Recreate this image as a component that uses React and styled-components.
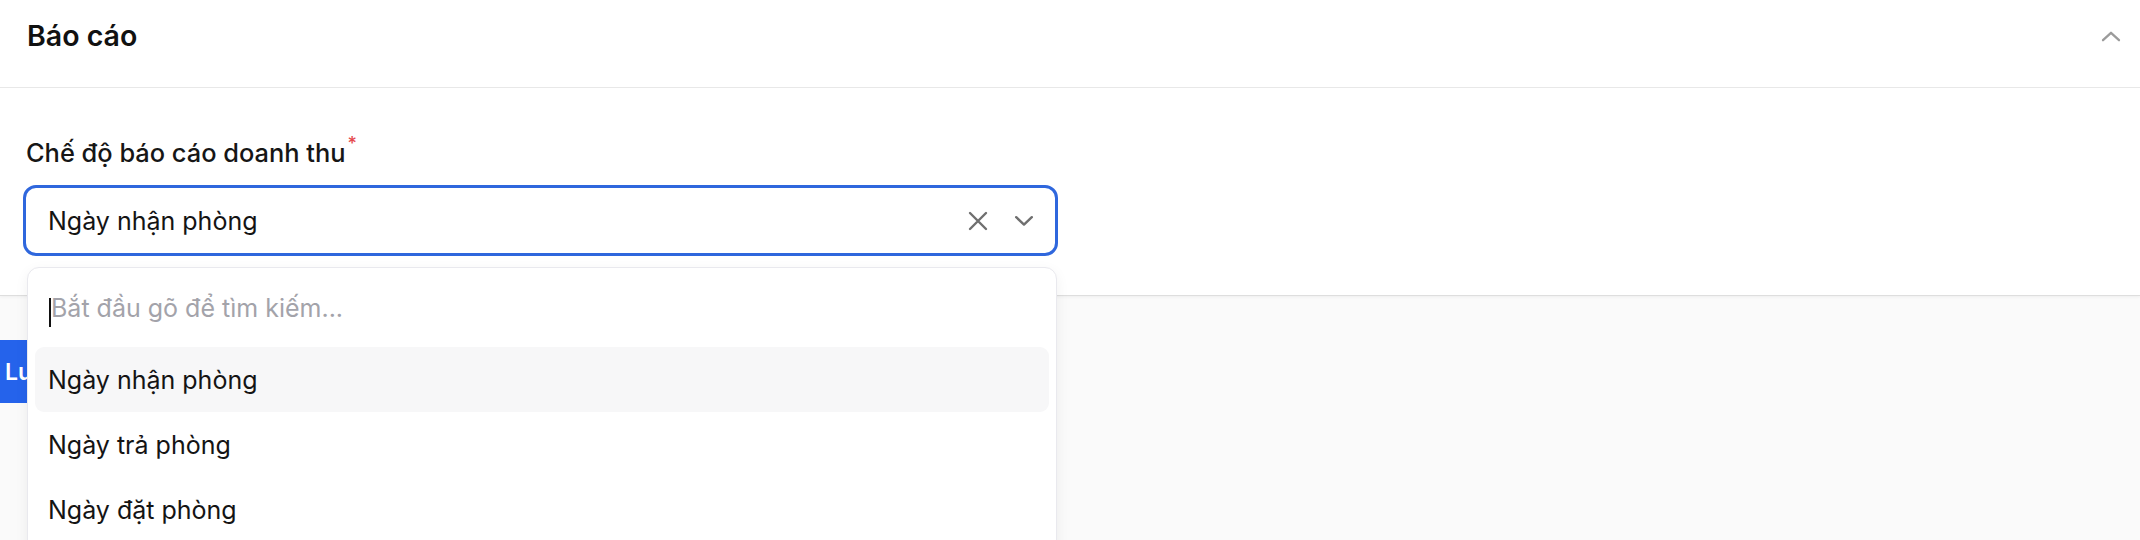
import React from "react";
import styled, { createGlobalStyle } from "styled-components";

const Global = createGlobalStyle`
  html, body { margin: 0; padding: 0; }
  body {
    background: #fafafa;
    font-family: Inter, "Noto Sans", "Liberation Sans", sans-serif;
    color: #141414;
    width: 2140px;
    height: 540px;
    overflow: hidden;
  }
`;

const Page = styled.div`
  position: relative;
  width: 2140px;
  height: 540px;
`;

const Card = styled.section`
  background: #fff;
  border-bottom: 1px solid #dedede;
  box-shadow: 0 1px 3px rgba(0, 0, 0, 0.05);
`;

const Header = styled.header`
  height: 88px;
  box-sizing: border-box;
  display: flex;
  align-items: flex-start;
  justify-content: space-between;
  padding: 19px 19px 0 27px;
  border-bottom: 1px solid #e8e8e8;
`;

const Title = styled.h2`
  margin: 0;
  font-size: 28.5px;
  line-height: 34px;
  font-weight: 600;
  color: #111;
`;

const IconButton = styled.button`
  border: 0;
  background: none;
  padding: 0;
  height: ${(p) => p.$h || "auto"};
  display: flex;
  align-items: center;
  justify-content: center;
  color: ${(p) => p.$color || "#8a8a8a"};
  cursor: pointer;
`;

const Body = styled.div`
  padding: 50px 23px 39px;
`;

const Label = styled.label`
  display: block;
  margin-left: 3px;
  font-size: 25.4px;
  font-weight: 500;
  color: #161616;
  line-height: 30px;
  margin-bottom: 17px;
`;

const Required = styled.sup`
  color: #e5484d;
  font-size: 18px;
  line-height: 0;
  margin-left: 2px;
  position: relative;
  top: -3px;
`;

const Select = styled.div`
  width: 1035px;
  height: 71px;
  box-sizing: border-box;
  border: 3px solid #2f67dd;
  border-radius: 13px;
  display: flex;
  align-items: center;
  padding: 0 21px 0 22px;
  gap: 26px;
`;

const Value = styled.span`
  flex: 1;
  font-size: 25px;
  color: #141414;
`;

const Footer = styled.div`
  padding-top: 44px;
`;

const SaveButton = styled.button`
  display: flex;
  align-items: center;
  height: 63px;
  border: 0;
  border-radius: 0 8px 8px 0;
  background: #2563eb;
  color: #fff;
  font-family: inherit;
  font-size: 23px;
  font-weight: 600;
  padding: 0 24px 0 5px;
`;

const Menu = styled.div`
  position: absolute;
  left: 27px;
  top: 267px;
  width: 1030px;
  height: 300px;
  box-sizing: border-box;
  background: #fff;
  border: 1px solid #e9e9ee;
  border-radius: 12px;
  box-shadow: 0 4px 14px rgba(0, 0, 0, 0.06);
  padding: 0 7px;
`;

const SearchWrap = styled.div`
  position: relative;
  height: 79px;
`;

const Search = styled.input`
  display: block;
  width: 100%;
  height: 100%;
  box-sizing: border-box;
  border: 0;
  outline: none;
  background: transparent;
  padding: 0 14px 0 16px;
  font-family: inherit;
  font-size: 25px;
  color: #141414;
  &::placeholder {
    color: #a3a3aa;
  }
`;

const Caret = styled.span`
  position: absolute;
  left: 14px;
  top: 30px;
  width: 2px;
  height: 29px;
  background: #111;
`;

const Option = styled.div`
  height: 65px;
  display: flex;
  align-items: center;
  padding: 0 13px;
  border-radius: 9px;
  font-size: 25px;
  color: #141414;
  background: ${(p) => (p.$active ? "#f7f7f8" : "transparent")};
`;

const XIcon = () => (
  <svg width="20" height="20" viewBox="0 0 20 20" fill="none">
    <path d="M2 2L18 18M18 2L2 18" stroke="currentColor" strokeWidth="2.4" strokeLinecap="round" />
  </svg>
);

const ChevronDown = () => (
  <svg width="20" height="12" viewBox="0 0 20 12" fill="none">
    <path d="M2.2 2.2L10 9.6L17.8 2.2" stroke="currentColor" strokeWidth="2.4" strokeLinecap="round" strokeLinejoin="round" />
  </svg>
);

const ChevronUp = () => (
  <svg width="20" height="11" viewBox="0 0 20 11" fill="none">
    <path d="M2 9.2L10 1.8L18 9.2" stroke="currentColor" strokeWidth="2.3" strokeLinecap="round" strokeLinejoin="round" />
  </svg>
);

const options = ["Ngày nhận phòng", "Ngày trả phòng", "Ngày đặt phòng"];

export default function App() {
  return (
    <Page>
      <Global />
      <Card>
        <Header>
          <Title>Báo cáo</Title>
          <IconButton $h="34px" $color="#9b9b9b" aria-label="Thu gọn">
            <ChevronUp />
          </IconButton>
        </Header>
        <Body>
          <Label>
            Chế độ báo cáo doanh thu<Required>*</Required>
          </Label>
          <Select>
            <Value>Ngày nhận phòng</Value>
            <IconButton $color="#6f6f6f" aria-label="Xóa">
              <XIcon />
            </IconButton>
            <IconButton $color="#6f6f6f" aria-label="Mở">
              <ChevronDown />
            </IconButton>
          </Select>
        </Body>
      </Card>
      <Footer>
        <SaveButton>Lưu</SaveButton>
      </Footer>
      <Menu>
        <SearchWrap>
          <Search placeholder="Bắt đầu gõ để tìm kiếm..." />
          <Caret />
        </SearchWrap>
        {options.map((o, i) => (
          <Option key={o} $active={i === 0}>
            {o}
          </Option>
        ))}
      </Menu>
    </Page>
  );
}
